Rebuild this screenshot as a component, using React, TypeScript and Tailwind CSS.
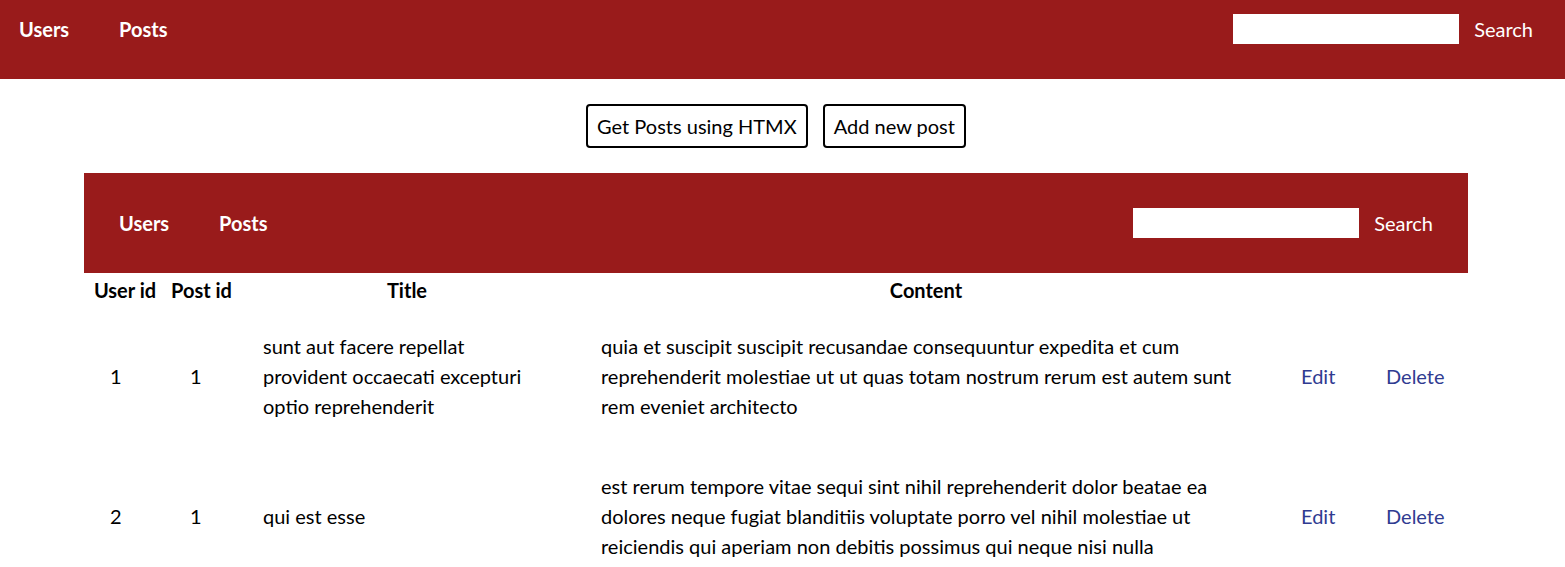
const posts = [
  {
    userId: 1,
    id: 1,
    title: "sunt aut facere repellat provident occaecati excepturi optio reprehenderit",
    body: "quia et suscipit suscipit recusandae consequuntur expedita et cum reprehenderit molestiae ut ut quas totam nostrum rerum est autem sunt rem eveniet architecto",
  },
  {
    userId: 2,
    id: 1,
    title: "qui est esse",
    body: "est rerum tempore vitae sequi sint nihil reprehenderit dolor beatae ea dolores neque fugiat blanditiis voluptate porro vel nihil molestiae ut reiciendis qui aperiam non debitis possimus qui neque nisi nulla",
  },
];

function NavBar({ className }: { className: string }) {
  return (
    <nav className={`flex justify-between bg-[#991b1b] text-white ${className}`}>
      <ul className="flex h-[30px] items-center font-bold">
        <li className="w-[100px]">Users</li>
        <li className="w-[100px]">Posts</li>
      </ul>
      <form className="flex h-[30px] items-center gap-[15px]">
        <input type="text" className="h-[30px] w-[226px] bg-white text-black outline-none" />
        <span>Search</span>
      </form>
    </nav>
  );
}

export default function App() {
  return (
    <div className="min-h-screen bg-white text-[20px] leading-[30px] text-black font-['Lato','Open_Sans',sans-serif]">
      <NavBar className="h-[79px] pl-[19px] pr-[32px] pt-[14px]" />
      <div className="w-[1552px]">
        <div className="mt-[25px] flex justify-center gap-[15px]">
          <button className="rounded-[4px] border-2 border-black bg-white px-[9px] py-[5px]">
            Get Posts using HTMX
          </button>
          <button className="rounded-[4px] border-2 border-black bg-white px-[9px] py-[5px]">
            Add new post
          </button>
        </div>
        <div className="ml-[84px] mt-[25px] w-[1384px]">
          <NavBar className="h-[100px] px-[35px] pt-[35px]" />
          <table className="w-[1384px] table-fixed border-separate border-spacing-[2px]">
            <colgroup>
              <col className="w-[78px]" />
              <col className="w-[71px]" />
              <col className="w-[336px]" />
              <col className="w-[698px]" />
              <col className="w-[83px]" />
              <col className="w-[104px]" />
            </colgroup>
            <thead>
              <tr className="font-bold">
                <th className="p-0 whitespace-nowrap">User id</th>
                <th className="p-0 whitespace-nowrap">Post id</th>
                <th className="p-0">Title</th>
                <th className="p-0">Content</th>
                <th className="p-0"></th>
                <th className="p-0"></th>
              </tr>
            </thead>
            <tbody>
              {posts.map((p, i) => (
                <tr key={i}>
                  <td className="p-6">{p.userId}</td>
                  <td className="p-6">{p.id}</td>
                  <td className="p-6">{p.title}</td>
                  <td className="p-6">{p.body}</td>
                  <td className="p-6 text-[#2f3b91]">Edit</td>
                  <td className="p-6 text-[#2f3b91]">Delete</td>
                </tr>
              ))}
            </tbody>
          </table>
        </div>
      </div>
    </div>
  );
}
